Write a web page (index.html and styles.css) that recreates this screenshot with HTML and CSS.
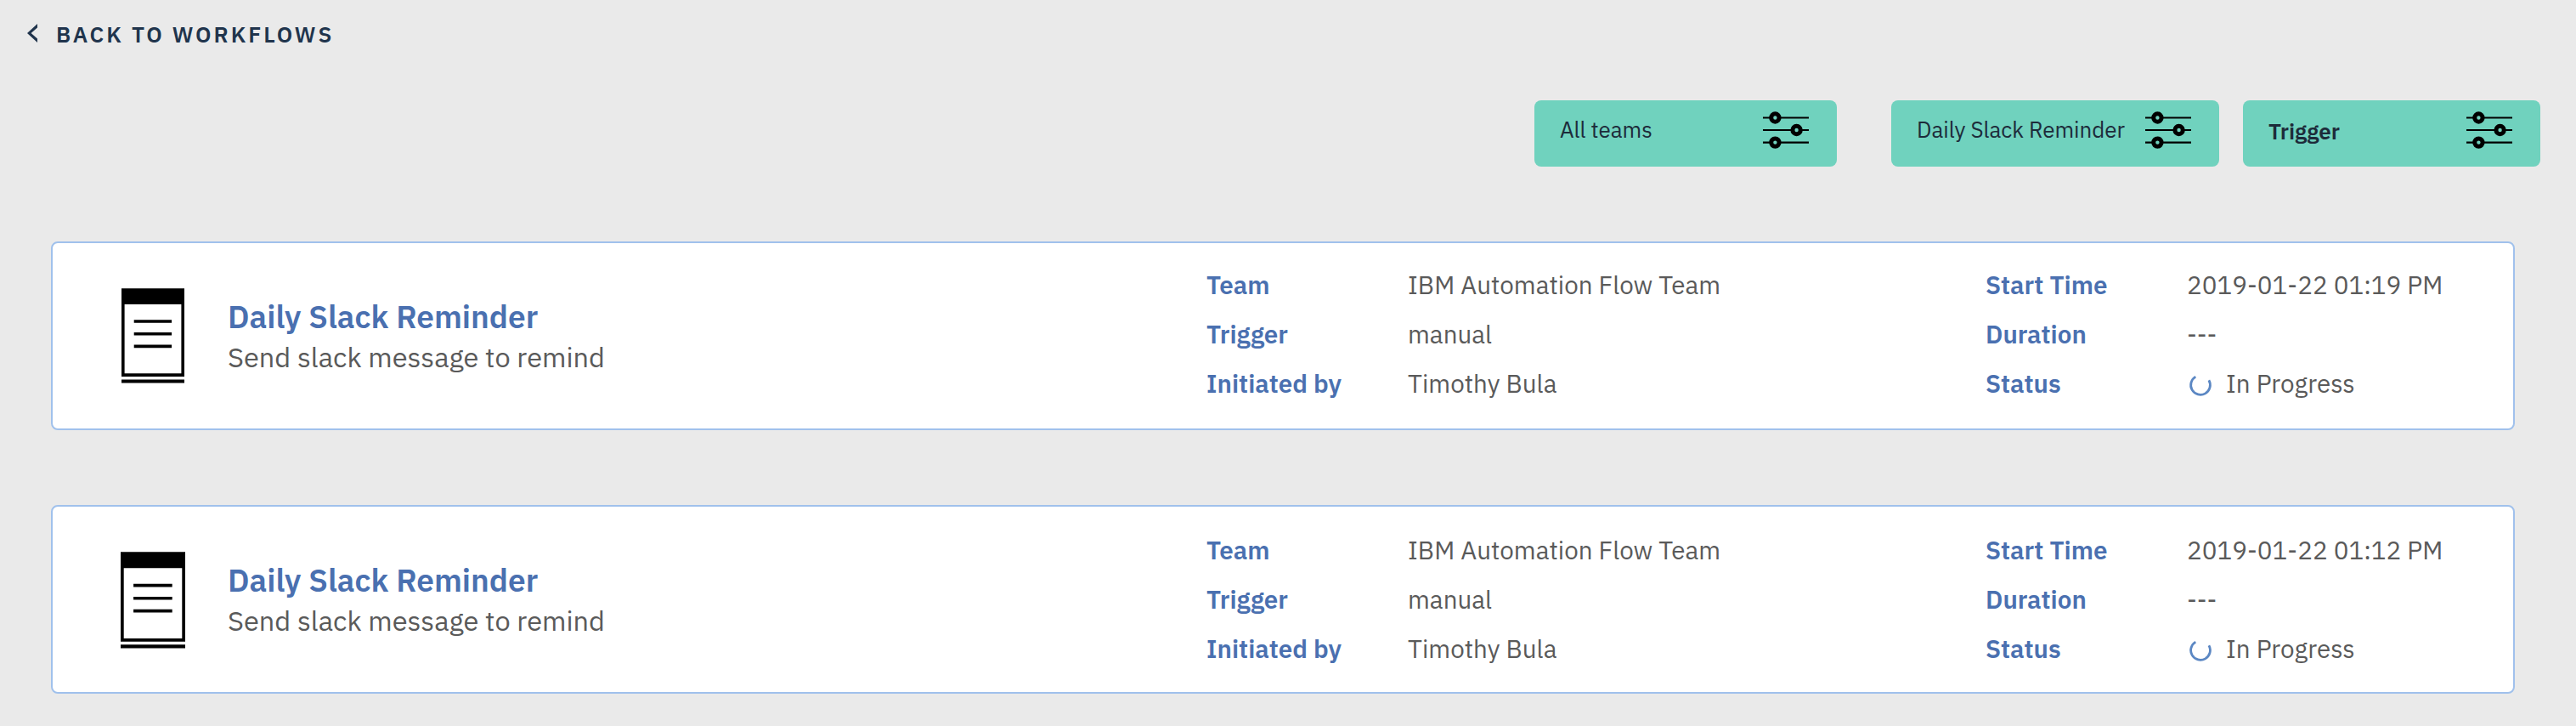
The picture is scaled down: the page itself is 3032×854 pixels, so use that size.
FILE: index.html
```
<!DOCTYPE html>
<html lang="en">
<head>
<meta charset="utf-8">
<title>Workflow activity</title>
<link rel="stylesheet" href="styles.css">
</head>
<body>
<svg class="defs" width="0" height="0">
  <symbol id="sliders" viewBox="0 0 56 44">
    <path d="M1 7.500h54M1 22h54M1 36.600h54" stroke="#000" stroke-width="2.200"/>
    <g fill="#70d2be" stroke="#000" stroke-width="5">
      <circle cx="15.400" cy="7.500" r="4.700"/>
      <circle cx="40.600" cy="22" r="4.700"/>
      <circle cx="15.400" cy="36.600" r="4.700"/>
    </g>
  </symbol>
  <symbol id="spinner" viewBox="0 0 28 28">
    <path d="M8.300 4.100A11.400 11.400 0 1 0 23.900 8.300" fill="none" stroke="#5b87c3" stroke-width="2.800"/>
  </symbol>
  <symbol id="notepad" viewBox="0 0 74 112" preserveAspectRatio="none">
    <path d="M0 .3h74v103.700H0zM3.600 19v81.200h66.800V19z" fill-rule="evenodd"/>
    <path d="M0 107.400h74v4.200H0zM14.700 37.200h44.400v3.600H14.700zM14.700 52h44.400v3.600H14.700zM14.700 66.600h44.400v3.600H14.700z"/>
  </symbol>
</svg>
<header class="top">
  <a class="back"><svg class="chevron" viewBox="0 0 12 22"><path d="M12 0v4.600L4.600 11 12 17.400V22L0 11z" fill="#20344c"/></svg><span>BACK TO WORKFLOWS</span></a>
</header>
<nav class="filters">
  <div class="filter teams"><span>All teams</span><svg class="sliders"><use href="#sliders"/></svg></div>
  <div class="filter workflow"><span>Daily Slack Reminder</span><svg class="sliders"><use href="#sliders"/></svg></div>
  <div class="filter trigger"><span>Trigger</span><svg class="sliders"><use href="#sliders"/></svg></div>
</nav>
<main class="list">
  <article class="card">
    <svg class="notepad"><use href="#notepad"/></svg>
    <div class="summary"><h2>Daily Slack Reminder</h2><p>Send slack message to remind</p></div>
    <dl class="facts origin">
      <dt>Team</dt><dd>IBM Automation Flow Team</dd>
      <dt>Trigger</dt><dd>manual</dd>
      <dt>Initiated by</dt><dd>Timothy Bula</dd>
    </dl>
    <dl class="facts timing">
      <dt>Start Time</dt><dd>2019-01-22 01:19 PM</dd>
      <dt>Duration</dt><dd>---</dd>
      <dt>Status</dt><dd class="status"><svg class="spinner"><use href="#spinner"/></svg>In Progress</dd>
    </dl>
  </article>
  <article class="card second">
    <svg class="notepad"><use href="#notepad"/></svg>
    <div class="summary"><h2>Daily Slack Reminder</h2><p>Send slack message to remind</p></div>
    <dl class="facts origin">
      <dt>Team</dt><dd>IBM Automation Flow Team</dd>
      <dt>Trigger</dt><dd>manual</dd>
      <dt>Initiated by</dt><dd>Timothy Bula</dd>
    </dl>
    <dl class="facts timing">
      <dt>Start Time</dt><dd>2019-01-22 01:12 PM</dd>
      <dt>Duration</dt><dd>---</dd>
      <dt>Status</dt><dd class="status"><svg class="spinner"><use href="#spinner"/></svg>In Progress</dd>
    </dl>
  </article>
</main>
</body>
</html>
```
FILE: styles.css
```
* { box-sizing: border-box; margin: 0; padding: 0; }
body {
  width: 3032px;
  height: 854px;
  overflow: hidden;
  background: #eaeaea;
  font-family: "IBM Plex Sans", Roboto, "Open Sans", sans-serif;
  color: #20344c;
}
.defs { display: block; height: 0; }
.top { height: 118px; padding: 23px 0 0 32px; }
.back {
  display: flex;
  height: 34px;
  gap: 22px;
  font-size: 26px;
  font-weight: 600;
  line-height: 34px;
  letter-spacing: 2.950px;
}
.chevron { width: 12px; height: 22px; margin-top: 5px; }
.filters { display: flex; height: 78px; padding-left: 1806px; }
.filter {
  display: flex;
  justify-content: space-between;
  padding: 17px 32px 0 30px;
  border-radius: 8px;
  background: #70d2be;
  font-size: 26px;
  line-height: 34px;
  letter-spacing: -0.060px;
  color: #1d2b3a;
}
.teams { width: 356px; margin-right: 64px; }
.workflow { width: 386px; margin-right: 28px; }
.trigger { width: 350px; font-weight: 600; }
.trigger span { padding-top: 2px; }
.sliders { width: 56px; height: 44px; margin-top: -4px; }
.list { display: grid; gap: 88px; padding: 88px 72px 0 60px; }
.card {
  display: grid;
  grid-template-columns: 125px 1152px 917px 1fr;
  height: 222px;
  padding-left: 81px;
  border: 2px solid #a0c1ec;
  border-radius: 8px;
  background: #fff;
}
.notepad { width: 74px; height: 112px; margin-top: 53px; }
.summary { padding-top: 62px; line-height: 48px; }
.summary h2 { font-size: 37.100px; font-weight: 600; color: #4a70b0; }
.summary p { font-size: 32.600px; color: #5a5a5a; }
.facts {
  display: grid;
  grid-template-columns: 237px 1fr;
  grid-auto-rows: 58px;
  padding-top: 20px;
  font-size: 29.600px;
  line-height: 58px;
}
.facts dt { font-weight: 600; color: #4a70b0; }
.facts dd { color: #5a5a5a; }
.status { display: flex; align-items: center; gap: 16px; }
.spinner { width: 28px; height: 28px; margin: 3px 0 0 2px; }
.second .notepad { width: 76px; height: 114px; margin-left: -1px; }
.second .facts { padding-top: 22px; }
```
